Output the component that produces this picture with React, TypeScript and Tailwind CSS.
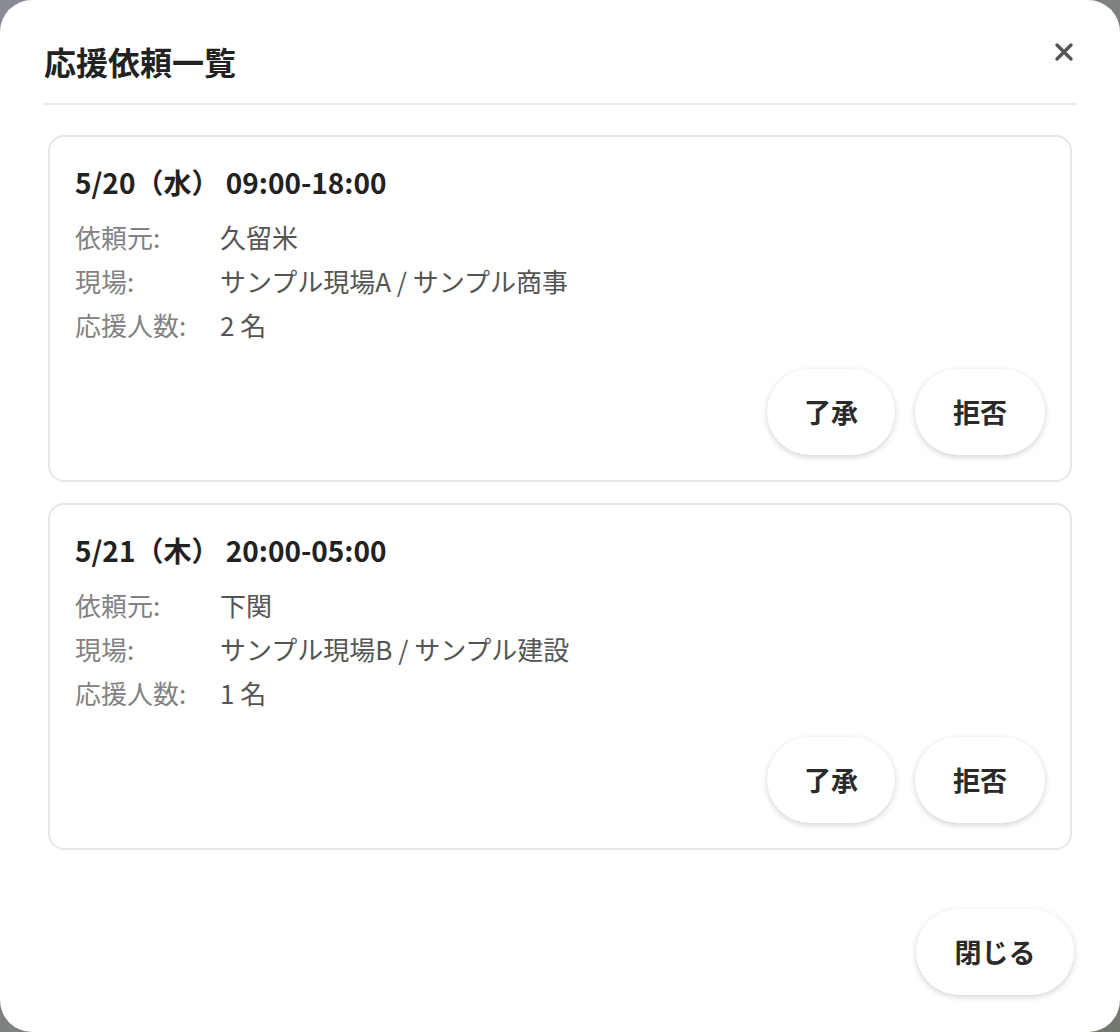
const requests = [
  {
    date: "5/20（水） 09:00-18:00",
    from: "久留米",
    site: "サンプル現場A / サンプル商事",
    count: "2 名",
  },
  {
    date: "5/21（木） 20:00-05:00",
    from: "下関",
    site: "サンプル現場B / サンプル建設",
    count: "1 名",
  },
];

const font = { fontFamily: '"Noto Sans CJK JP", "Noto Sans", sans-serif' };

function PillButton({ label, className = "" }: { label: string; className?: string }) {
  return (
    <button
      className={`h-[86px] rounded-full bg-white text-[27px] font-bold text-[#2a2a2a] shadow-[0_2px_6px_rgba(0,0,0,0.18)] ${className}`}
    >
      {label}
    </button>
  );
}

export default function App() {
  return (
    <div
      className="h-[1032px] w-[1120px] bg-gradient-to-br from-[#868b94] to-[#727a70]"
      style={font}
    >
      <div className="flex h-full w-full flex-col rounded-[32px] bg-white">
        <header className="mx-[44px] flex h-[105px] items-start justify-between border-b-2 border-[#ebebeb] pt-[39px]">
          <h1 className="text-[32px] font-bold leading-[44px] text-[#222]">応援依頼一覧</h1>
          <button className="mr-[2px] mt-[3px] h-[20px] text-[#555]" aria-label="close">
            <svg width="20" height="20" viewBox="0 0 20 20">
              <path d="M3 3 L17 17 M17 3 L3 17" stroke="currentColor" strokeWidth="3.4" strokeLinecap="round" />
            </svg>
          </button>
        </header>

        <div className="flex flex-col gap-[21px] px-[48px] pt-[30px]">
          {requests.map((r) => (
            <div
              key={r.date}
              className="flex h-[347px] flex-col rounded-[16px] border-2 border-[#e6e6e6] px-[25px] pt-[27px]"
            >
              <p className="text-[28px] font-bold leading-[36px] text-[#222]">{r.date}</p>
              <div className="mt-[15px] grid grid-cols-[145px_1fr] text-[26px] leading-[44px]">
                <span className="text-[#828282]">依頼元:</span>
                <span className="text-[#555]">{r.from}</span>
                <span className="text-[#828282]">現場:</span>
                <span className="text-[#555]">{r.site}</span>
                <span className="text-[#828282]">応援人数:</span>
                <span className="text-[#555]">{r.count}</span>
              </div>
              <div className="mt-[22px] flex justify-end gap-[20px]">
                <PillButton label="了承" className="w-[128px]" />
                <PillButton label="拒否" className="w-[130px]" />
              </div>
            </div>
          ))}
        </div>

        <div className="mt-auto flex justify-end px-[46px] pb-[37px]">
          <PillButton label="閉じる" className="w-[158px]" />
        </div>
      </div>
    </div>
  );
}
